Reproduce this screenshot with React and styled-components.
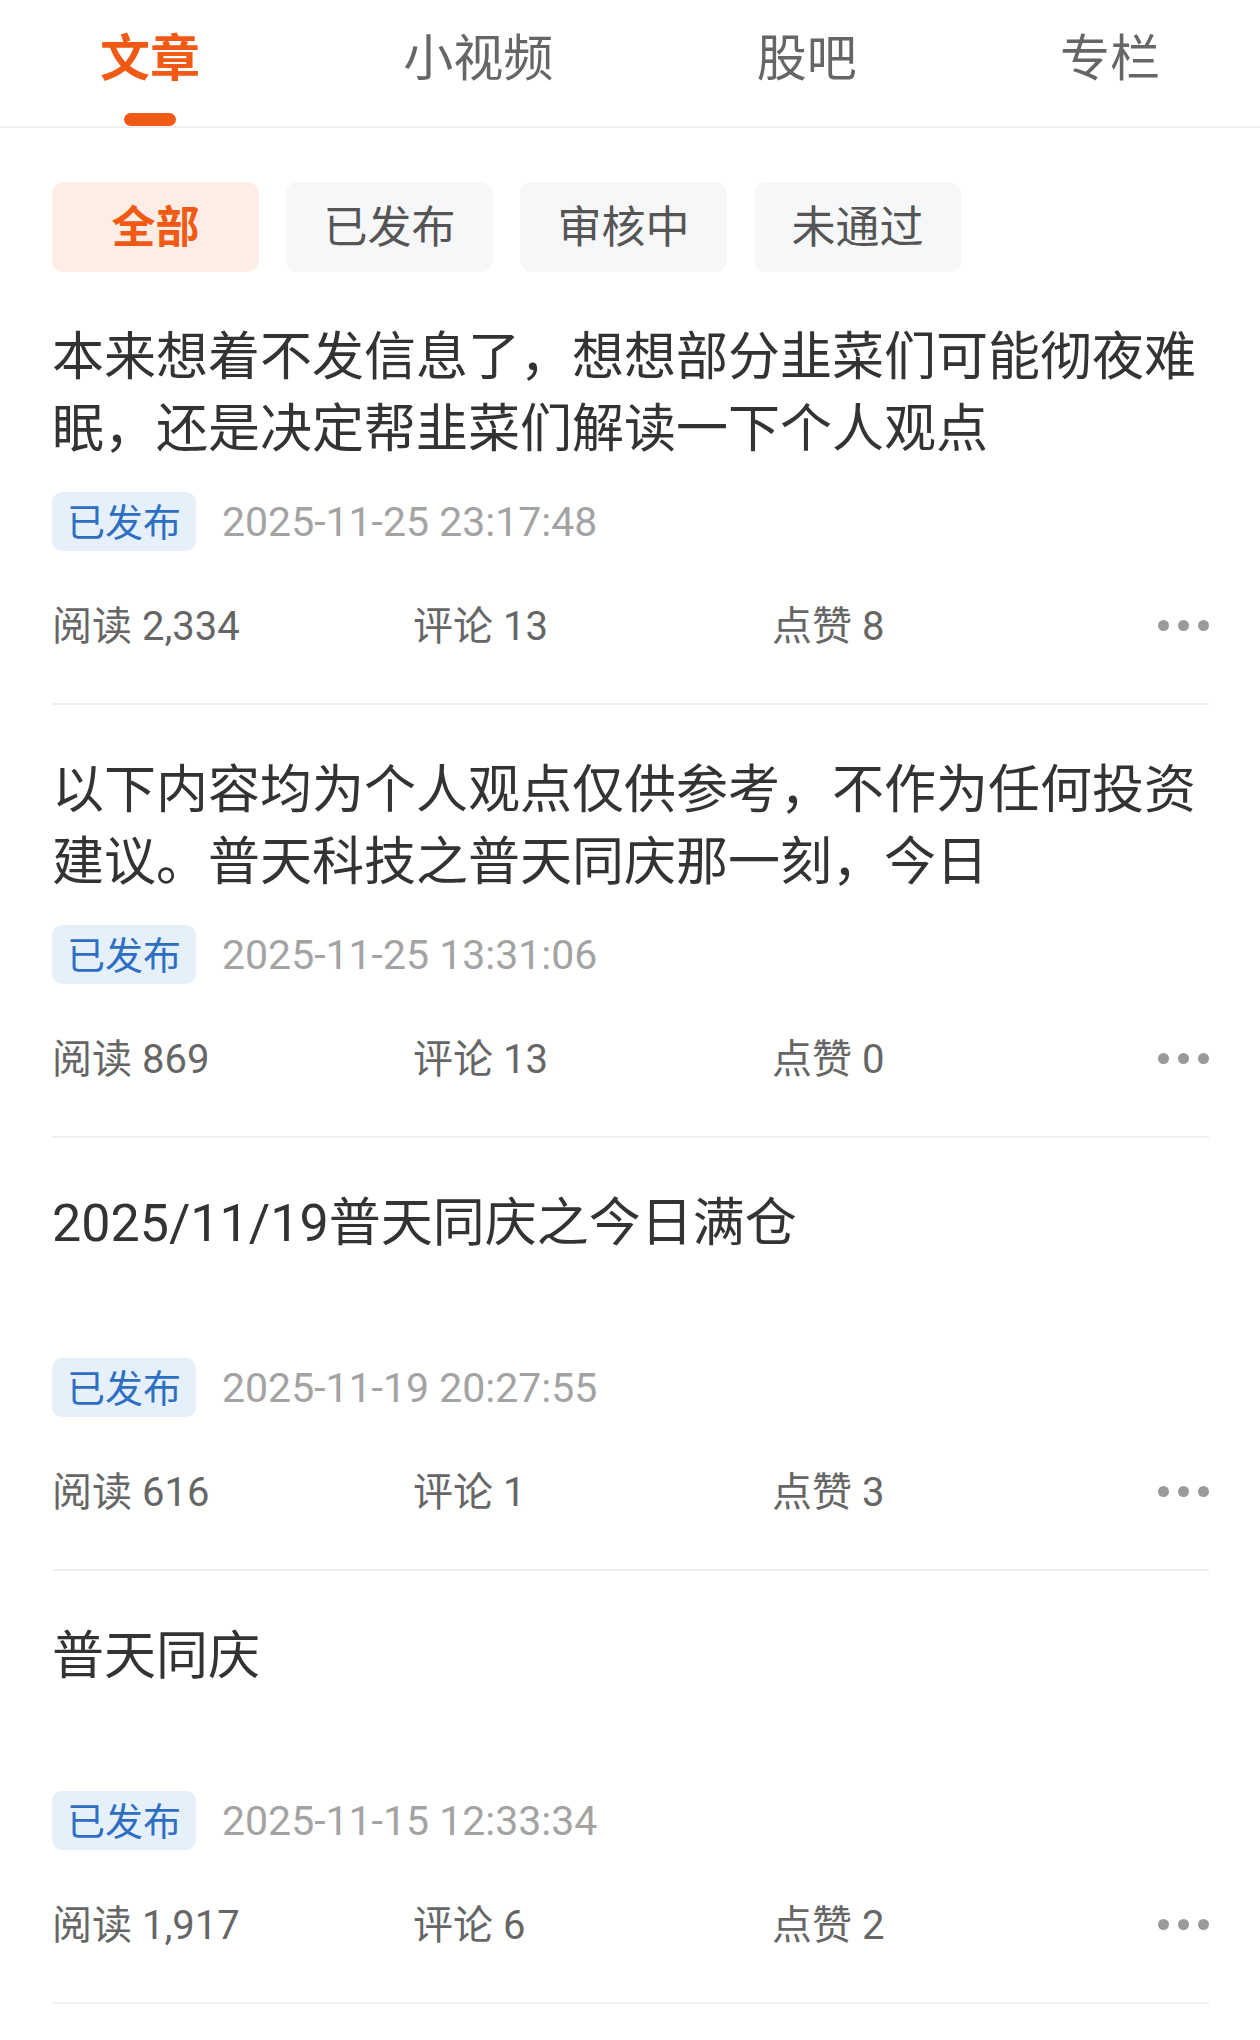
import React, { useState } from 'react'
import styled, { createGlobalStyle } from 'styled-components'

const GlobalStyle = createGlobalStyle`
  html, body {
    margin: 0;
    padding: 0;
    background: #ffffff;
  }
  body {
    font-family: Roboto, "Noto Sans CJK SC", sans-serif;
  }
`

const tabs = ['文章', '小视频', '股吧', '专栏']
const filters = ['全部', '已发布', '审核中', '未通过']

const articles = [
  {
    title: '本来想着不发信息了，想想部分韭菜们可能彻夜难眠，还是决定帮韭菜们解读一下个人观点',
    time: '2025-11-25 23:17:48',
    reads: '2,334',
    comments: 13,
    likes: 8,
  },
  {
    title: '以下内容均为个人观点仅供参考，不作为任何投资建议。普天科技之普天同庆那一刻，今日',
    time: '2025-11-25 13:31:06',
    reads: '869',
    comments: 13,
    likes: 0,
  },
  {
    title: '2025/11/19普天同庆之今日满仓',
    time: '2025-11-19 20:27:55',
    reads: '616',
    comments: 1,
    likes: 3,
  },
  {
    title: '普天同庆',
    time: '2025-11-15 12:33:34',
    reads: '1,917',
    comments: 6,
    likes: 2,
  },
]

function App() {
  const [tab, setTab] = useState(0)
  const [filter, setFilter] = useState(0)

  return (
    <Page>
      <GlobalStyle />
      <TabBar>
        {tabs.map((t, i) => (
          <Tab key={t} onClick={() => setTab(i)}>
            <TabLabel $active={i === tab}>{t}</TabLabel>
            <Indicator $active={i === tab} />
          </Tab>
        ))}
      </TabBar>

      <FilterRow>
        {filters.map((f, i) => (
          <FilterChip key={f} $active={i === filter} onClick={() => setFilter(i)}>
            {f}
          </FilterChip>
        ))}
      </FilterRow>

      <List>
        {articles.map((a) => (
          <Article key={a.time}>
            <Title>{a.title}</Title>
            <Meta>
              <Status>已发布</Status>
              <Time>{a.time}</Time>
            </Meta>
            <Stats>
              <Stat>阅读 {a.reads}</Stat>
              <Stat>评论 {a.comments}</Stat>
              <Stat>点赞 {a.likes}</Stat>
              <More>
                <Dot />
                <Dot />
                <Dot />
              </More>
            </Stats>
          </Article>
        ))}
      </List>
    </Page>
  )
}

export default App

const Page = styled.div`
  width: 1260px;
  min-height: 2040px;
  background: #fff;
`

const TabBar = styled.div`
  display: flex;
  justify-content: space-between;
  padding: 0 100px;
  height: 126px;
  border-bottom: 2px solid #efefef;
`

const Tab = styled.div`
  display: flex;
  flex-direction: column;
  align-items: center;
  padding-top: 29px;
  cursor: pointer;
`

const TabLabel = styled.div`
  font-size: 50px;
  line-height: 60px;
  font-weight: ${(p) => (p.$active ? 700 : 400)};
  color: ${(p) => (p.$active ? '#f05a14' : '#666666')};
`

const Indicator = styled.div`
  margin-top: 24px;
  width: 52px;
  height: 13px;
  border-radius: 7px;
  background: ${(p) => (p.$active ? '#f05a14' : 'transparent')};
`

const FilterRow = styled.div`
  display: flex;
  gap: 27px;
  padding: 54px 52px 0;
`

const FilterChip = styled.div`
  width: 207px;
  height: 90px;
  box-sizing: border-box;
  padding-bottom: 6px;
  border-radius: 12px;
  display: flex;
  align-items: center;
  justify-content: center;
  font-size: 44px;
  font-weight: ${(p) => (p.$active ? 700 : 400)};
  color: ${(p) => (p.$active ? '#f05a14' : '#555555')};
  background: ${(p) => (p.$active ? '#fdede5' : '#f6f7f9')};
  cursor: pointer;
`

const List = styled.div`
  padding: 0 51px 0 52px;
`

const Article = styled.div`
  padding: 50px 0 50px;
  border-bottom: 2px solid #efefef;
`

const Title = styled.div`
  font-size: 52px;
  line-height: 72px;
  min-height: 144px;
  max-height: 144px;
  overflow: hidden;
  color: #333333;
`

const Meta = styled.div`
  display: flex;
  align-items: center;
  gap: 26px;
  margin-top: 26px;
  height: 59px;
`

const Status = styled.div`
  height: 59px;
  box-sizing: border-box;
  padding: 0 15px 4px;
  border-radius: 10px;
  display: flex;
  align-items: center;
  font-size: 38px;
  color: #2e6fc4;
  background: #e5f0fb;
`

const Time = styled.div`
  font-size: 41px;
  color: #a3a3a3;
`

const Stats = styled.div`
  display: grid;
  grid-template-columns: 361px 359px 1fr auto;
  align-items: center;
  margin-top: 46px;
  height: 56px;
`

const Stat = styled.div`
  font-size: 40px;
  line-height: 50px;
  padding-top: 4px;
  color: #666666;
`

const More = styled.div`
  display: flex;
  gap: 9px;
  align-items: center;
`

const Dot = styled.span`
  width: 11px;
  height: 11px;
  border-radius: 50%;
  background: #9a9a9a;
`
